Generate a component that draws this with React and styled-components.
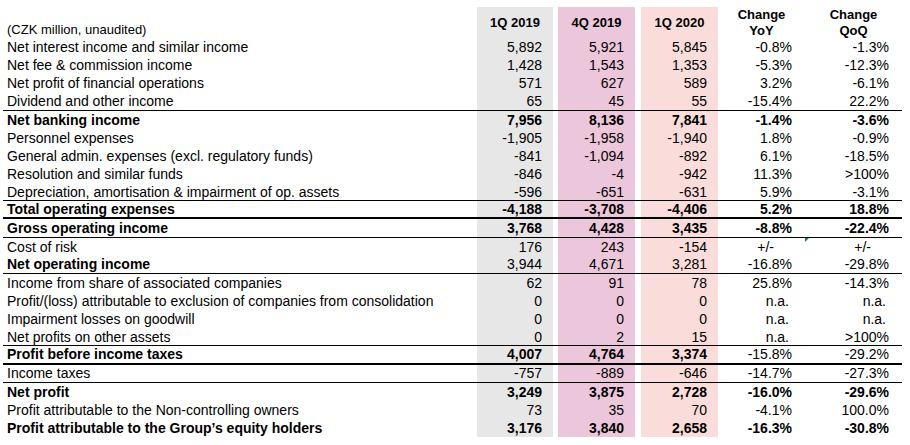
import React from 'react';
import styled, { createGlobalStyle } from 'styled-components';

const GlobalStyle = createGlobalStyle`
  html, body {
    margin: 0;
    padding: 0;
    background: #fff;
  }
  body {
    font-family: "Liberation Sans", Arial, sans-serif;
    color: #000;
  }
`;

const TONES = {
  gray: '#e7e7e7',
  pink: '#ecc6da',
  rose: '#fadddb',
  none: 'transparent',
};

// colored columns sit with a small white gap between them
const COLUMNS = [
  { key: 'q1_19', tone: 'gray', inset: 0 },
  { key: 'q4_19', tone: 'pink', inset: 5 },
  { key: 'q1_20', tone: 'rose', inset: 6 },
];

const Sheet = styled.div`
  width: 899px;
  margin: 7px 0 0 3px;
`;

const Row = styled.div`
  display: grid;
  grid-template-columns: 474px 76px 82px 83px 87px 97px;
  height: ${p => (p.$head ? '31px' : '18.15px')};
  box-sizing: border-box;
  border-bottom: ${p => (p.$rule === 'thick' ? '2px solid #000' : p.$rule === 'thin' ? '1px solid #000' : 'none')};
  font-weight: ${p => (p.$bold ? 700 : 400)};
  font-size: ${p => (p.$head ? '13px' : '14px')};
`;

const Label = styled.div`
  padding-left: 4px;
  display: flex;
  align-items: ${p => (p.$head ? 'flex-end' : 'center')};
  padding-bottom: ${p => (p.$head ? '2px' : '0')};
  white-space: nowrap;
`;

const Value = styled.div`
  position: relative;
  margin-left: ${p => p.$inset || 0}px;
  background: ${p => TONES[p.$tone || 'none']};
  display: flex;
  align-items: center;
  justify-content: flex-end;
  padding-right: ${p => p.$pad}px;
  white-space: nowrap;

  ${p =>
    p.$flag &&
    `&::before {
      content: '';
      position: absolute;
      top: 0;
      left: 0;
      border-top: 4px solid #1e8a2e;
      border-right: 4px solid transparent;
    }`}
`;

const HeadCell = styled.div`
  margin-left: ${p => p.$inset || 0}px;
  background: ${p => TONES[p.$tone || 'none']};
  display: flex;
  flex-direction: column;
  align-items: center;
  justify-content: center;
  font-weight: 700;
  line-height: 16px;
  text-align: center;
`;

const rows = [
  ['Net interest income and similar income', '5,892', '5,921', '5,845', '-0.8%', '-1.3%'],
  ['Net fee & commission income', '1,428', '1,543', '1,353', '-5.3%', '-12.3%'],
  ['Net profit of financial operations', '571', '627', '589', '3.2%', '-6.1%'],
  ['Dividend and other income', '65', '45', '55', '-15.4%', '22.2%', { rule: 'thin' }],
  ['Net banking income', '7,956', '8,136', '7,841', '-1.4%', '-3.6%', { bold: true }],
  ['Personnel expenses', '-1,905', '-1,958', '-1,940', '1.8%', '-0.9%'],
  ['General admin. expenses (excl. regulatory funds)', '-841', '-1,094', '-892', '6.1%', '-18.5%'],
  ['Resolution and similar funds', '-846', '-4', '-942', '11.3%', '>100%'],
  ['Depreciation, amortisation & impairment of op. assets', '-596', '-651', '-631', '5.9%', '-3.1%', { rule: 'thin' }],
  ['Total operating expenses', '-4,188', '-3,708', '-4,406', '5.2%', '18.8%', { bold: true, rule: 'thick' }],
  ['Gross operating income', '3,768', '4,428', '3,435', '-8.8%', '-22.4%', { bold: true, rule: 'thin' }],
  ['Cost of risk', '176', '243', '-154', '+/-', '+/-', { flag: true }],
  ['Net operating income', '3,944', '4,671', '3,281', '-16.8%', '-29.8%', { rule: 'thin', boldLabel: true }],
  ['Income from share of associated companies', '62', '91', '78', '25.8%', '-14.3%'],
  ['Profit/(loss) attributable to exclusion of companies from consolidation', '0', '0', '0', 'n.a.', 'n.a.'],
  ['Impairment losses on goodwill', '0', '0', '0', 'n.a.', 'n.a.'],
  ['Net profits on other assets', '0', '2', '15', 'n.a.', '>100%', { rule: 'thin' }],
  ['Profit before income taxes', '4,007', '4,764', '3,374', '-15.8%', '-29.2%', { boldLabel: true, boldNums: true, rule: 'thick' }],
  ['Income taxes', '-757', '-889', '-646', '-14.7%', '-27.3%', { rule: 'thin' }],
  ['Net profit', '3,249', '3,875', '2,728', '-16.0%', '-29.6%', { bold: true }],
  ['Profit attributable to the Non-controlling owners', '73', '35', '70', '-4.1%', '100.0%'],
  ["Profit attributable to the Group\u2019s equity holders", '3,176', '3,840', '2,658', '-16.3%', '-30.8%', { bold: true }],
];

// right padding for the two change columns, by kind of value
const changePad = (v, base) => {
  if (v === '+/-') return base + 18;
  if (v === 'n.a.') return base + 3;
  return base;
};

const Bold = styled.span`
  font-weight: 700;
`;

function App() {
  return (
    <>
      <GlobalStyle />
      <Sheet>
        <Row $head>
          <Label $head>(CZK million, unaudited)</Label>
          <HeadCell $tone="gray">1Q 2019</HeadCell>
          <HeadCell $tone="pink" $inset={5}>4Q 2019</HeadCell>
          <HeadCell $tone="rose" $inset={6}>1Q 2020</HeadCell>
          <HeadCell>
            <span>Change</span>
            <span>YoY</span>
          </HeadCell>
          <HeadCell>
            <span>Change</span>
            <span>QoQ</span>
          </HeadCell>
        </Row>
        {rows.map(([label, a, b, c, yoy, qoq, opt = {}]) => {
          const nums = [a, b, c];
          return (
            <Row key={label} $bold={opt.bold} $rule={opt.rule}>
              <Label>{opt.boldLabel ? <Bold>{label}</Bold> : label}</Label>
              {COLUMNS.map((col, i) => (
                <Value key={col.key} $tone={col.tone} $inset={col.inset} $pad={11}>
                  {opt.boldNums ? <Bold>{nums[i]}</Bold> : nums[i]}
                </Value>
              ))}
              <Value $pad={changePad(yoy, 13)}>{yoy}</Value>
              <Value $pad={changePad(qoq, 13)} $flag={opt.flag}>{qoq}</Value>
            </Row>
          );
        })}
      </Sheet>
    </>
  );
}

export default App;
